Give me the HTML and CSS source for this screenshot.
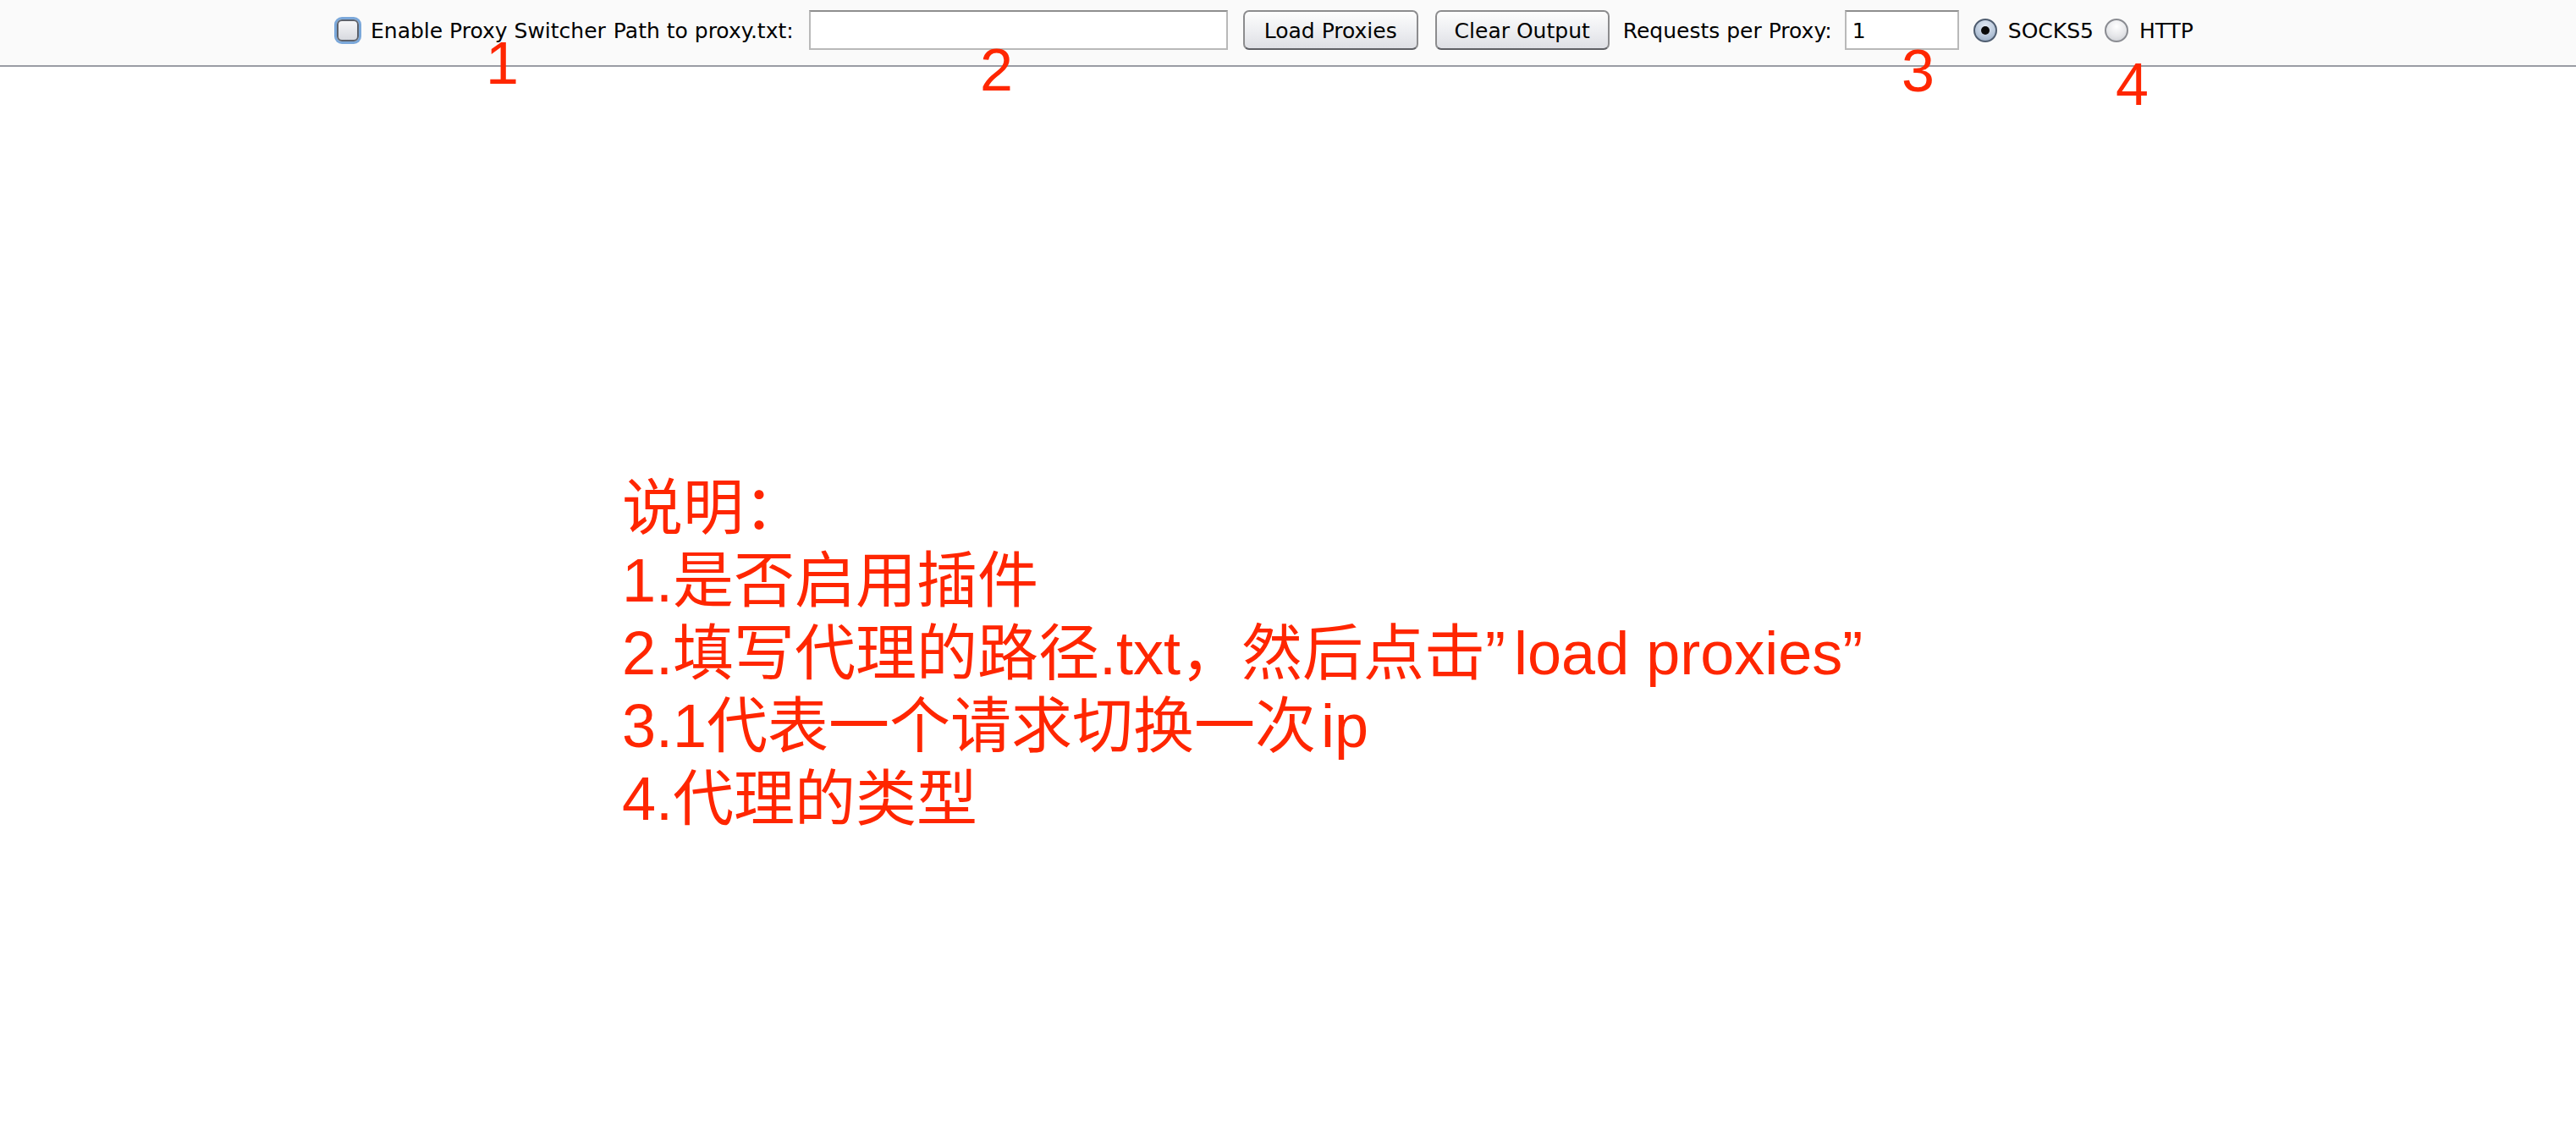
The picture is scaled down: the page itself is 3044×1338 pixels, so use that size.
FILE: index.html
```html
<!DOCTYPE html>
<html lang="zh-CN">
<head>
<meta charset="utf-8">
<title>Proxy Switcher</title>
<link rel="stylesheet" href="styles.css">
</head>
<body>
<div class="toolbar">
  <label class="check"><span class="box"></span><span class="txt">Enable Proxy Switcher</span></label>
  <span class="lbl path">Path to proxy.txt:</span>
  <div class="field wide"></div>
  <div class="btn load">Load Proxies</div>
  <div class="btn clear">Clear Output</div>
  <span class="lbl req">Requests per Proxy:</span>
  <div class="field narrow">1</div>
  <label class="radio on"><span class="dot"></span><span class="txt">SOCKS5</span></label>
  <label class="radio"><span class="dot"></span><span class="txt">HTTP</span></label>

  <span class="mark m1">1</span>
  <span class="mark m2">2</span>
  <span class="mark m3">3</span>
  <span class="mark m4">4</span>
</div>
<div class="main">
  <div class="notes">
    <div>说明：</div>
    <div>1.是否启用插件</div>
    <div>2.填写代理的路径.txt，然后点击<span class="q">”</span>load proxies”</div>
    <div>3.1代表一个请求切换一次<span class="ip">ip</span></div>
    <div>4.代理的类型</div>
  </div>
</div>
</body>
</html>
```

FILE: styles.css
```css
html, body {
  margin: 0;
  padding: 0;
  background: #ffffff;
}

body {
  width: 3044px;
  height: 1338px;
  overflow: hidden;
  font-family: "DejaVu Sans", "Liberation Sans", sans-serif;
}

.toolbar {
  position: relative;
  height: 79px;
  box-sizing: border-box;
  background: #fafafa;
  border-bottom: 2px solid #9a9ca4;
  padding: 12px 0 0 395px;
  display: flex;
  align-items: flex-start;
  flex-wrap: nowrap;
  font-size: 25px;
  color: #000;
}

.toolbar > * {
  flex: none;
}

.check, .radio {
  display: flex;
  align-items: center;
  height: 47px;
  white-space: nowrap;
}

.check .txt, .radio .txt, .lbl {
  padding-top: 2px;
}

.lbl {
  height: 47px;
  box-sizing: border-box;
  line-height: 45px;
  white-space: nowrap;
}

.check .box {
  width: 26px;
  height: 26px;
  box-sizing: border-box;
  border-radius: 6px;
  border: 2px solid #5d626c;
  background: linear-gradient(#f6f6f8, #d7d9df);
  box-shadow: 0 0 0 3px #7ba8da;
  margin: 0 14px 0 3px;
}

.path {
  margin-left: 9px;
}

.field {
  height: 47px;
  box-sizing: border-box;
  background: #fff;
  border: 2px solid #b9b9b9;
  border-top-color: #8f8f8f;
  line-height: 45px;
  padding-left: 7px;
}

.wide {
  width: 495px;
  margin-left: 18px;
}

.btn {
  height: 47px;
  box-sizing: border-box;
  border: 2px solid #8c8c8e;
  border-bottom-color: #5f6065;
  border-radius: 7px;
  background: linear-gradient(#fdfdfd, #eeeff2 50%, #dedfe4);
  text-align: center;
  line-height: 45px;
}

.load {
  width: 207px;
  margin-left: 18px;
}

.clear {
  width: 206px;
  margin-left: 20px;
}

.req {
  margin-left: 16px;
}

.narrow {
  width: 135px;
  margin-left: 15px;
}

.radio .dot {
  width: 28px;
  height: 28px;
  box-sizing: border-box;
  border-radius: 50%;
  border: 2px solid #8a8c92;
  background: radial-gradient(circle at 50% 30%, #ffffff, #e6e7ea 55%, #c9cbd1);
  margin-right: 13px;
  display: flex;
  align-items: center;
  justify-content: center;
}

.radio.on .dot {
  border-color: #4f5d70;
  background: radial-gradient(circle at 50% 30%, #e3ebf5, #b9c8db 55%, #8ea3bd);
}

.radio.on .dot::after {
  content: "";
  width: 10px;
  height: 10px;
  border-radius: 50%;
  background: #0a0a0a;
}

.radio.on {
  margin-left: 17px;
}

.radio + .radio {
  margin-left: 13px;
}

.mark {
  position: absolute;
  font-family: "Liberation Sans", sans-serif;
  font-size: 70px;
  line-height: 70px;
  color: #ff2600;
}

.m1 { left: 574px; top: 40px; }
.m2 { left: 1158px; top: 48px; }
.m3 { left: 2247px; top: 49px; }
.m4 { left: 2500px; top: 65px; }

.main {
  padding: 478px 0 0 735px;
}

.notes {
  font-family: "Liberation Sans", "Noto Sans CJK SC", sans-serif;
  font-size: 72px;
  line-height: 86px;
  color: #ff2600;
  white-space: nowrap;
}

.q {
  margin-right: 10px;
}

.ip {
  margin-left: 6px;
}
```
